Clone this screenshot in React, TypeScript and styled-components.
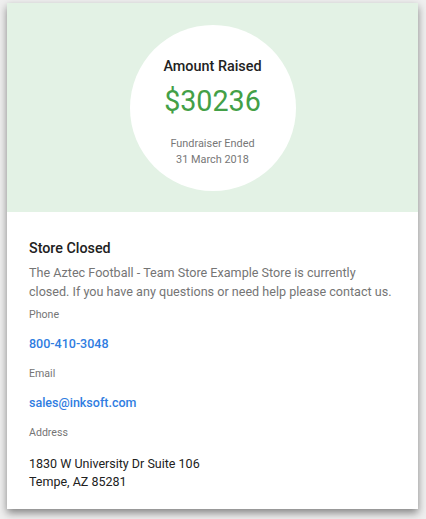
import React from "react";
import styled, { createGlobalStyle } from "styled-components";

const Global = createGlobalStyle`
  html, body { margin: 0; padding: 0; background: #efefef; }
  body { font-family: Roboto, "Noto Sans", sans-serif; -webkit-font-smoothing: antialiased; }
  * { box-sizing: border-box; }
`;

const Page = styled.div`
  padding: 3px 8px 10px 7px;
`;

const Card = styled.div`
  width: 411px;
  height: 506px;
  background: #fff;
  box-shadow: 0 4px 8px rgba(0, 0, 0, 0.45);
  display: flex;
  flex-direction: column;
`;

const Hero = styled.div`
  flex-shrink: 0;
  height: 209px;
  background: #e3f2e5;
  display: flex;
  justify-content: center;
  padding-top: 22px;
`;

const Circle = styled.div`
  width: 166px;
  height: 166px;
  border-radius: 50%;
  background: #fff;
  display: flex;
  flex-direction: column;
  align-items: center;
  padding-top: 33px;
`;

const HeroTitle = styled.div`
  font-size: 14.4px;
  font-weight: 500;
  color: #222;
  line-height: 18px;
`;

const Amount = styled.div`
  font-size: 28.7px;
  color: #43a047;
  line-height: 34px;
  margin-top: 8px;
`;

const HeroNote = styled.div`
  font-size: 10.9px;
  color: #777;
  line-height: 16px;
  text-align: center;
  margin-top: 18px;
`;

const Body = styled.div`
  padding: 27px 22px 0 22px;
  display: flex;
  flex-direction: column;
`;

const Heading = styled.div`
  font-size: 14.3px;
  font-weight: 500;
  color: #212121;
  line-height: 18px;
`;

const Paragraph = styled.div`
  font-size: 12.6px;
  color: #757575;
  line-height: 19px;
  margin-top: 6px;
`;

const Label = styled.div<{ $gap: number }>`
  font-size: 10.6px;
  color: #757575;
  line-height: 14px;
  margin-top: ${(p) => p.$gap}px;
`;

const Link = styled.a`
  font-size: 12.5px;
  font-weight: 500;
  color: #2f7de1;
  line-height: 18px;
  text-decoration: none;
  margin-top: 13px;
`;

const Address = styled.div`
  font-size: 12.5px;
  color: #212121;
  line-height: 18px;
  margin-top: 15px;
`;

export default function App() {
  return (
    <Page>
      <Global />
      <Card>
        <Hero>
          <Circle>
            <HeroTitle>Amount Raised</HeroTitle>
            <Amount>$30236</Amount>
            <HeroNote>
              Fundraiser Ended
              <br />
              31 March 2018
            </HeroNote>
          </Circle>
        </Hero>
        <Body>
          <Heading>Store Closed</Heading>
          <Paragraph>
            The Aztec Football - Team Store Example Store is currently closed. If you have any
            questions or need help please contact us.
          </Paragraph>
          <Label $gap={6.5}>Phone</Label>
          <Link href="#">800-410-3048</Link>
          <Label $gap={14}>Email</Label>
          <Link href="#">sales@inksoft.com</Link>
          <Label $gap={14}>Address</Label>
          <Address>
            1830 W University Dr Suite 106
            <br />
            Tempe, AZ 85281
          </Address>
        </Body>
      </Card>
    </Page>
  );
}
